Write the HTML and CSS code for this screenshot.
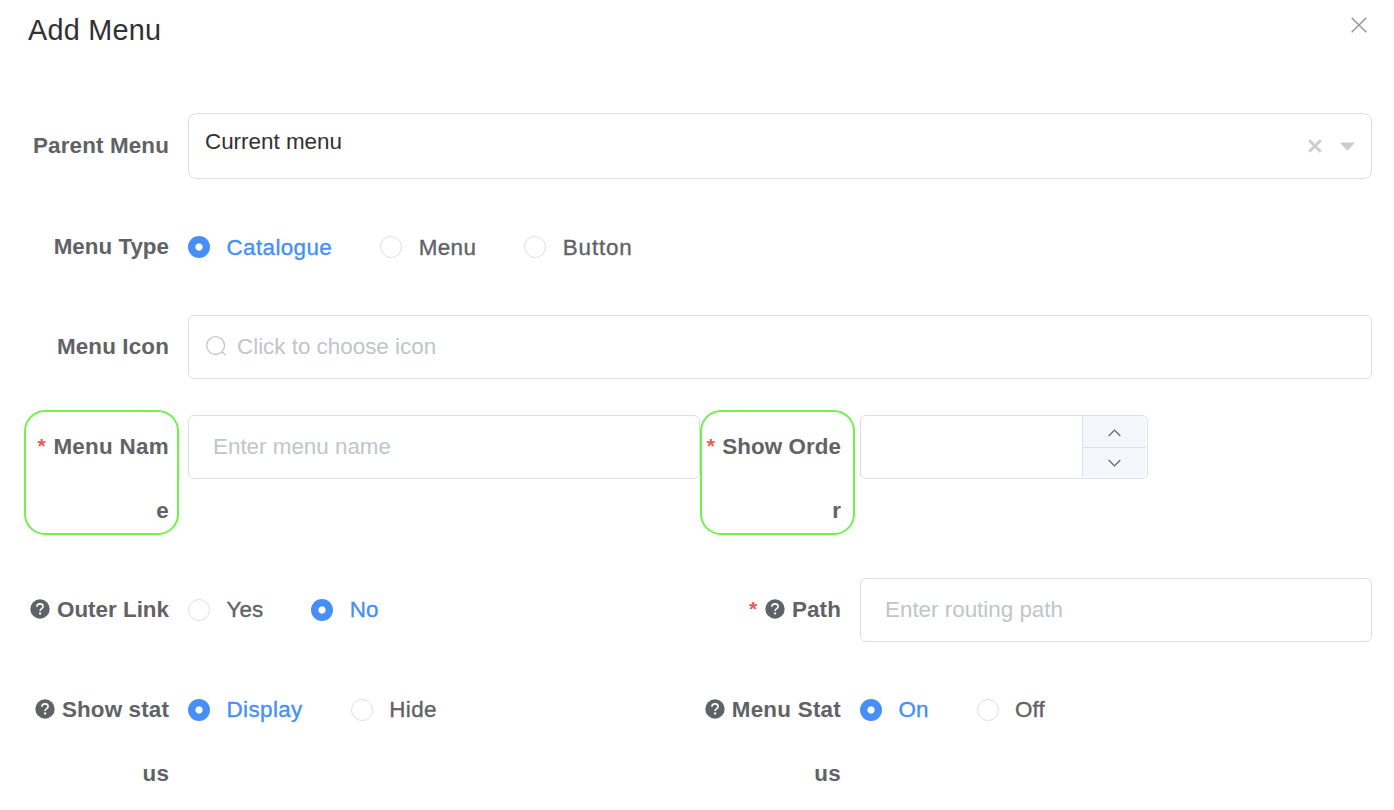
FILE: index.html
```html
<!DOCTYPE html>
<html lang="en">
<head>
<meta charset="utf-8">
<title>Add Menu</title>
<link rel="stylesheet" href="styles.css">
</head>
<body>
<svg class="defs" width="0" height="0">
  <symbol id="help" viewBox="0 0 20 20">
    <circle cx="10" cy="10" r="9.7" fill="#606266"/>
    <path d="M6.9 7.7C6.9 5.900 8.200 4.900 10 4.900s3.100 1 3.100 2.600c0 2.100-3 2.200-3 4.400" fill="none" stroke="#fff" stroke-width="1.6"/>
    <circle cx="10.1" cy="14.5" r="1.15" fill="#fff"/>
  </symbol>
</svg>
<main class="dialog">
  <header class="header">
    <h1 class="title">Add Menu</h1>
    <svg class="close" viewBox="0 0 16 16"><path d="M.7.7l14.6 14.6M15.3.7L.7 15.3"/></svg>
  </header>
  <form class="form">
    <div class="row">
      <div class="label tall">Parent Menu</div>
      <div class="field select">
        <span class="value">Current menu</span>
        <svg class="clear" viewBox="0 0 14 14"><path d="M1.2 1.2l11.6 11.6M12.8 1.2L1.2 12.8"/></svg>
        <svg class="caret" viewBox="0 0 15 9"><path d="M1 .5h13q.8.3.2 1L8.3 7.900q-.8.700-1.600 0L.8 1.500Q.2.800 1 .5z"/></svg>
      </div>
    </div>
    <div class="row">
      <div class="label tight">Menu Type</div>
      <div class="radios">
        <span class="radio on"><i class="dot"></i><span class="type">Catalogue</span></span>
        <span class="radio"><i class="dot"></i><span class="type">Menu</span></span>
        <span class="radio wide"><i class="dot"></i><span class="type">Button</span></span>
      </div>
    </div>
    <div class="row">
      <div class="label">Menu Icon</div>
      <div class="field search">
        <svg class="glass" viewBox="0 0 20 20"><circle cx="9.600" cy="9.600" r="8.900"/><path d="M15.800 15.800l3.600 3.200"/></svg>
        <span class="hint">Click to choose icon</span>
      </div>
    </div>
    <div class="row names">
      <div class="half">
        <div class="label required marked shift">Menu Nam<br>e</div>
        <div class="field"><span class="hint">Enter menu name</span></div>
      </div>
      <div class="half">
        <div class="label required marked order">Show Orde<br>r</div>
        <div class="number">
          <div class="entry"></div>
          <div class="steps">
            <span class="step"><svg class="chev" viewBox="0 0 13 8"><path d="M.7 7l5.800-5.800L12.300 7"/></svg></span>
            <span class="step"><svg class="chev" viewBox="0 0 13 8"><path d="M.7 1l5.800 5.800L12.300 1"/></svg></span>
          </div>
        </div>
      </div>
    </div>
    <div class="row">
      <div class="half">
        <div class="label tight"><svg class="help"><use href="#help"/></svg>Outer Link</div>
        <div class="radios">
          <span class="radio short"><i class="dot"></i>Yes</span>
          <span class="radio short on"><i class="dot"></i>No</span>
        </div>
      </div>
      <div class="half">
        <div class="label required"><svg class="help"><use href="#help"/></svg>Path</div>
        <div class="field"><span class="hint">Enter routing path</span></div>
      </div>
    </div>
    <div class="row">
      <div class="half">
        <div class="label"><svg class="help"><use href="#help"/></svg>Show stat<br>us</div>
        <div class="radios">
          <span class="radio on"><i class="dot"></i>Display</span>
          <span class="radio"><i class="dot"></i>Hide</span>
        </div>
      </div>
      <div class="half">
        <div class="label status"><svg class="help"><use href="#help"/></svg>Menu Stat<br>us</div>
        <div class="radios">
          <span class="radio short on"><i class="dot"></i>On</span>
          <span class="radio short"><i class="dot"></i>Off</span>
        </div>
      </div>
    </div>
  </form>
</main>
</body>
</html>
```
FILE: styles.css
```css
*, *::before, *::after { box-sizing: border-box; }
body {
  margin: 0;
  height: 810px;
  overflow: hidden;
  background: #fff;
  color: #606266;
  font: 22.4px/64px "Liberation Sans", Arial, sans-serif;
}
.defs { position: absolute; }
.dialog { padding: 0 22px 0 28px; }
.header {
  display: flex;
  justify-content: space-between;
  align-items: flex-start;
  height: 113px;
  padding: 10px 5px 0 0;
}
.title { margin: 0; font-size: 28.8px; font-weight: 400; line-height: 40px; letter-spacing: .25px; color: #303133; }
.close { width: 16px; height: 16px; margin-top: 6.5px; fill: none; stroke: #909399; stroke-width: 1.4; }
.form { display: flex; flex-direction: column; gap: 36px; }
.row, .half { display: flex; align-items: flex-start; }
.names { margin-bottom: -1px; }
.half { width: 672px; flex: none; }
.label {
  position: relative;
  flex: none;
  width: 160px;
  padding-right: 19px;
  text-align: right;
  font-weight: 700;
  letter-spacing: .15px;
  white-space: nowrap;
}
.tight { letter-spacing: 0; }
.tall { line-height: 66px; }
.required::before {
  content: "*";
  margin-right: 7.5px;
  color: #f15654;
  font-size: 21px;
  line-height: 1;
  vertical-align: 1px;
}
.marked::after {
  content: "";
  position: absolute;
  top: -5px;
  left: 0;
  width: 155px;
  height: 125px;
  border: 2px solid #70f24b;
  border-radius: 21px;
}
.marked.shift { letter-spacing: .3px; }
.marked.order { letter-spacing: .05px; }
.shift::after { left: -4px; }
.help { width: 20px; height: 20px; margin-right: 7px; vertical-align: -2px; }
.status { letter-spacing: .25px; }
.field {
  display: flex;
  align-items: center;
  flex: 1;
  height: 64px;
  padding: 0 24px;
  border: 1px solid #dcdfe6;
  border-radius: 6px;
}
.hint { color: #c0c4cc; }
.select { height: 66px; padding: 0 16px; border-color: #ddd; border-radius: 8px; }
.value { flex: 1; color: #303133; padding-bottom: 9px; }
.clear { width: 14px; height: 14px; margin-right: 18px; fill: none; stroke: #ccc; stroke-width: 2.8; }
.caret { width: 15px; height: 9px; fill: #ccc; }
.search { padding: 0 17px; gap: 11px; }
.glass { width: 20px; height: 20px; margin-bottom: 2px; fill: none; stroke: #c0c4cc; stroke-width: 1.3; }
.radios { display: flex; gap: 48px; height: 64px; }
.radio {
  display: flex;
  align-items: center;
  gap: 16.5px;
  letter-spacing: .4px;
  -webkit-text-stroke: .35px currentColor;
}
.type { padding-top: 2px; }
.short { letter-spacing: .1px; }
.wide { letter-spacing: .85px; }
.dot { width: 22px; height: 22px; border: 1px solid #dcdfe6; border-radius: 50%; }
.on { color: #458ff7; }
.on .dot { border: none; background: radial-gradient(circle, #fff 3.1px, #458ff7 4.1px); }
.number {
  display: flex;
  width: 288px;
  height: 64px;
  padding: 0 1px 1px;
  border: 1px solid #dcdfe6;
  border-radius: 6px;
}
.entry { flex: 1; }
.steps {
  display: grid;
  grid-template-rows: 31px 30px;
  width: 64px;
  border-left: 1px solid #dcdfe6;
  border-radius: 0 5px 5px 0;
  background: #f5f6fb;
  overflow: hidden;
}
.step { display: flex; align-items: center; justify-content: center; }
.step:first-child { padding-top: 2px; }
.step + .step { border-top: 1px solid #dcdfe6; }
.chev { width: 13px; height: 8px; fill: none; stroke: #606266; stroke-width: 1.2; }
```
